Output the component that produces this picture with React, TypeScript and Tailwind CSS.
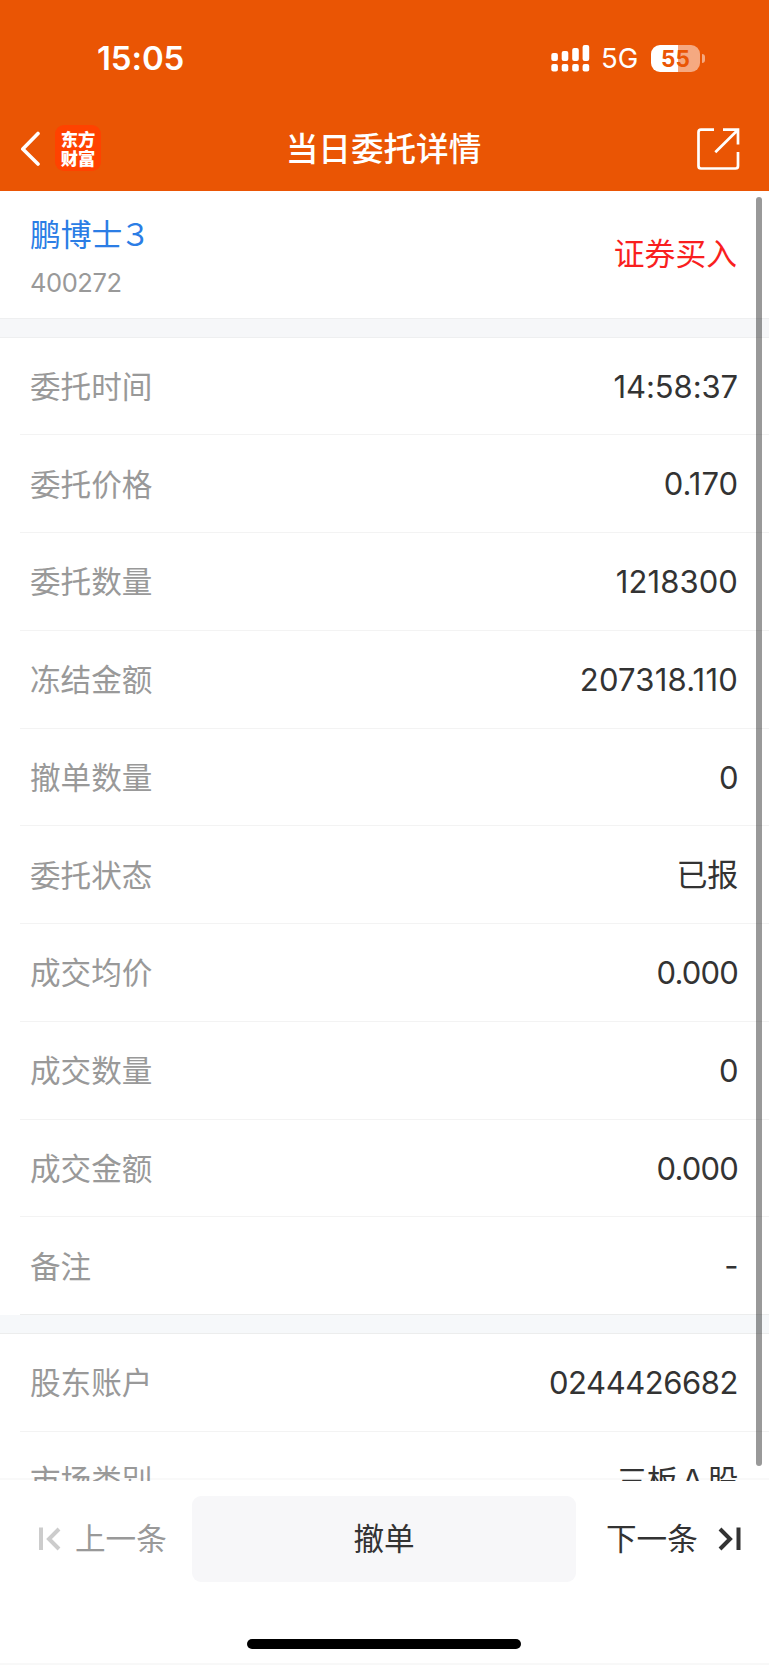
const orderRows = [
  { label: "委托时间", value: "14:58:37", tracking: "tracking-[-0.1px]" },
  { label: "委托价格", value: "0.170", tracking: "tracking-normal" },
  { label: "委托数量", value: "1218300", tracking: "tracking-[0.1px]" },
  { label: "冻结金额", value: "207318.110", tracking: "tracking-[0.2px]" },
  { label: "撤单数量", value: "0", tracking: "tracking-[-0.6px]" },
  { label: "委托状态", value: "已报", tracking: "tracking-[-0.2px]" },
  { label: "成交均价", value: "0.000", tracking: "tracking-[-0.8px]" },
  { label: "成交数量", value: "0", tracking: "tracking-[-0.6px]" },
  { label: "成交金额", value: "0.000", tracking: "tracking-[-0.8px]" },
  { label: "备注", value: "-", tracking: "tracking-[-0.6px]" },
];

const accountRows = [
  { label: "股东账户", value: "0244426682", tracking: "tracking-[-0.45px]" },
  { label: "市场类别", value: "三板Ａ股", tracking: "tracking-[-0.6px]" },
];

function StatusBar() {
  return (
    <div className="flex h-[106px] items-start justify-between pl-[97px] pr-[64px] pt-[38px] text-white">
      <span className="h-[40px] text-[33px] font-semibold leading-[40px] tracking-[-0.1px]">15:05</span>
      <div className="flex h-[40px] items-center">
        <svg width="39" height="28" viewBox="0 0 39 28" fill="currentColor">
          <rect x="0.3" y="9" width="6.6" height="8" rx="2" />
          <rect x="10.7" y="7" width="6.6" height="10" rx="2" />
          <rect x="21.2" y="4" width="6.6" height="13" rx="2" />
          <rect x="31.6" y="1" width="6.6" height="16" rx="2" />
          <rect x="0.3" y="20" width="6.6" height="7.4" rx="2" />
          <rect x="10.7" y="20" width="6.6" height="7.4" rx="2" />
          <rect x="21.2" y="20" width="6.6" height="7.4" rx="2" />
          <rect x="31.6" y="20" width="6.6" height="7.4" rx="2" />
        </svg>
        <span className="ml-[11px] w-[38px] text-[27.5px] leading-[40px]">5G</span>
        <div className="ml-[12px] flex h-[27px] w-[49px] items-center justify-center rounded-[9px] bg-linear-to-r from-white from-55% to-[#f5a981] to-55%">
          <span className="text-[22.5px] font-bold leading-[27px] text-[#ea5504]">55</span>
        </div>
        <div className="ml-[2px] h-[9px] w-[3px] rounded-r-full bg-[#f5a981]" />
      </div>
    </div>
  );
}

function NavBar() {
  return (
    <div className="flex h-[85px] items-start justify-between pl-[20px] pr-[29px] text-white">
      <div className="flex w-[127px] items-center pt-[18px]">
        <svg width="21" height="36" viewBox="0 0 21 36" fill="none" stroke="currentColor" strokeWidth="3.6" strokeLinecap="round" strokeLinejoin="round">
          <path d="M18 3.5 2.8 19 18 34" />
        </svg>
        <div className="ml-[14px] mt-px flex h-[46px] w-[46px] flex-col items-center justify-center rounded-[9px] bg-[#ff4200] font-['Noto_Sans_CJK_SC',sans-serif] text-[17.3px] font-black leading-[19px]">
          <span>东方</span>
          <span>财富</span>
        </div>
      </div>
      <h1 className="pt-[21px] text-[32.6px] font-medium leading-[44px]">当日委托详情</h1>
      <div className="flex w-[120px] justify-end pt-[22px]">
        <svg width="43" height="43" viewBox="0 0 43 43" fill="none" stroke="currentColor" strokeWidth="2.7" strokeLinejoin="round">
          <path d="M17 1.7H4Q1.5 1.7 1.5 4.2V38Q1.5 40.5 4 40.5H38.5Q41 40.5 41 38V24" />
          <path d="M26 1.7H41V16.5M41 1.7 18.3 24.3" strokeLinejoin="miter" />
        </svg>
      </div>
    </div>
  );
}

type RowProps = { label: string; value: string; tracking: string; last?: boolean };

function Row({ label, value, tracking, last }: RowProps) {
  return (
    <div className={`ml-[20px] flex h-[97.75px] shrink-0 items-center justify-between border-b pl-[10px] pr-[31px] pt-[2px] ${last ? "border-[#eceded]" : "border-[#f3f3f3]"}`}>
      <span className="text-[30.6px] text-[#999999]">{label}</span>
      <span className={`text-[31px] text-[#333333] ${tracking}`}>{value}</span>
    </div>
  );
}

export default function App() {
  return (
    <div className="flex h-[1665px] w-[769px] flex-col overflow-hidden bg-white font-['Inter','Noto_Sans_CJK_SC',sans-serif]">
      <header className="shrink-0 bg-[#ea5504]">
        <StatusBar />
        <NavBar />
      </header>

      <main className="relative flex h-[1290px] shrink-0 flex-col overflow-hidden">
        <section className="flex h-[127px] shrink-0 justify-between pl-[30px] pr-[32px]">
          <div className="flex flex-col pt-[22px]">
            <span className="text-[30.8px] leading-[44px] text-[#2b7de5]">
              鹏博士<span className="-ml-[2.5px]">３</span>
            </span>
            <span className="mt-[9px] text-[25.5px] leading-[34px] tracking-[-0.45px] text-[#999999]">400272</span>
          </div>
          <span className="pt-[41px] text-[30.8px] leading-[44px] text-[#f91f1f]">证券买入</span>
        </section>
        <div className="h-[19.5px] shrink-0 border-y border-[#eeeff0] bg-[#f6f7f9]" />
        {orderRows.map((row, i) => (
          <Row key={row.label} {...row} last={i === orderRows.length - 1} />
        ))}
        <div className="h-[19px] shrink-0 border-b border-[#eceded] bg-[#f6f8fa]" />
        {accountRows.map((row) => (
          <Row key={row.label} {...row} />
        ))}

        {/* scroll indicator */}
        <div className="absolute right-[7px] top-[6px] h-[1269px] w-[6px] rounded-full bg-black/40" />
        {/* hairline above the action bar */}
        <div className="absolute inset-x-0 bottom-[1px] h-[2px] bg-black/[0.025]" />
      </main>

      <footer className="flex flex-1 flex-col items-center border-b-2 border-[#f8f8f8]">
        <div className="flex h-[101px] w-full items-end pl-[38px]">
          <div className="flex h-[86px] w-[154px] shrink-0 items-center text-[30.6px] text-[#999999]">
            <svg className="shrink-0" width="23" height="24" viewBox="0 0 23 24" fill="none" stroke="#cccccc" strokeWidth="4">
              <path d="M3 .5V23M21 2 11 12 21 22" />
            </svg>
            <span className="ml-[14px] whitespace-nowrap">上一条</span>
          </div>
          <button className="h-[86px] w-[384px] shrink-0 rounded-[9px] bg-[#f7f7f9] text-[30.6px] text-[#333333]">撤单</button>
          <div className="ml-[30px] flex h-[86px] w-[135px] items-center justify-between text-[30.6px] text-[#333333]">
            <span className="whitespace-nowrap">下一条</span>
            <svg className="shrink-0" width="23" height="24" viewBox="0 0 23 24" fill="none" stroke="currentColor" strokeWidth="4">
              <path d="M2 2 12 12 2 22M20.5 .5V23" />
            </svg>
          </div>
        </div>
        <div className="mt-[57px] mr-px h-[10px] w-[274px] rounded-full bg-black" />
      </footer>
    </div>
  );
}
